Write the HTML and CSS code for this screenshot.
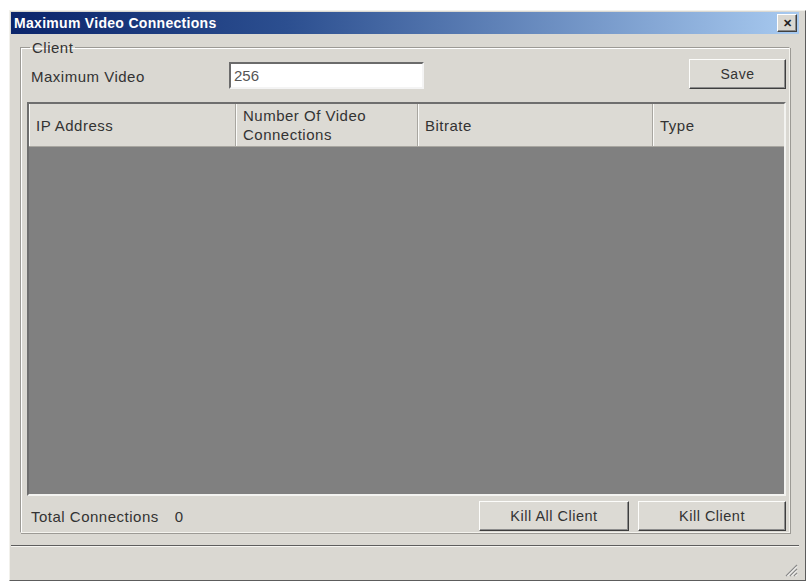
FILE: index.html
```html
<!DOCTYPE html>
<html lang="en">
<head>
  <meta charset="UTF-8">
  <meta name="viewport" content="width=device-width, initial-scale=1.0">
  <title>Maximum Video Connections</title>
  <link rel="stylesheet" href="styles.css">
</head>
<body>
  <div class="window">
    <!-- Barre de titre -->
    <div class="titlebar">
      <span class="title">Maximum Video Connections</span>
      <button class="close" title="Close">&#x2715;</button>
    </div>

    <div class="client-area">
      <fieldset class="group">
        <legend>Client</legend>

        <div class="top-row">
          <label for="max-video">Maximum Video</label>
          <input id="max-video" type="text" value="256">
          <button class="btn save">Save</button>
        </div>

        <!-- Liste des clients -->
        <div class="listview">
          <div class="lv-header">
            <div class="col">IP Address</div>
            <div class="col">Number Of Video<br>Connections</div>
            <div class="col">Bitrate</div>
            <div class="col">Type</div>
          </div>
          <div class="lv-body"></div>
        </div>

        <div class="bottom-row">
          <span class="total-label">Total Connections</span>
          <span class="total-value">0</span>
          <button class="btn kill-all">Kill All Client</button>
          <button class="btn kill">Kill Client</button>
        </div>
      </fieldset>
    </div>

    <div class="statusbar">
      <svg class="grip" width="13" height="13" viewBox="0 0 13 13">
        <path d="M12 1 L1 12 M12 5 L5 12 M12 9 L9 12" stroke="#8a8a8a" stroke-width="1.2"/>
        <path d="M12 2.5 L2.5 12 M12 6.5 L6.5 12 M12 10.5 L10.5 12" stroke="#ffffff" stroke-width="1"/>
      </svg>
    </div>
  </div>
</body>
</html>
```

FILE: styles.css
```css
/* Style général */
body {
  margin: 0;
  padding: 0;
  background: #fff;
  font-family: "Liberation Sans", Arial, sans-serif;
  font-size: 15px;
  letter-spacing: 0.5px;
  color: #333;
}

.window {
  box-sizing: border-box;
  width: 797px;
  height: 571px;
  margin: 10px 0 0 9px;
  padding: 1px 6px 2px 1px;
  background: #dad8d2;
  border: 1px solid;
  border-color: #f2f1ec #5c5c5c #5c5c5c #f2f1ec;
  display: flex;
  flex-direction: column;
}

/* Barre de titre */
.titlebar {
  height: 22px;
  flex-shrink: 0;
  display: flex;
  align-items: center;
  justify-content: space-between;
  padding: 0 2px 0 3px;
  background: linear-gradient(to right, #0b256b 0%, #2c4f90 35%, #a8caf0 100%);
}

.title {
  color: #fff;
  font-weight: bold;
  font-size: 14px;
  letter-spacing: 0.3px;
}

.close {
  width: 20px;
  height: 18px;
  padding: 0;
  font-size: 11px;
  font-weight: bold;
  line-height: 14px;
  letter-spacing: 0;
  color: #222;
  background: #d9d7d1;
  border: 1px solid;
  border-color: #fff #404040 #404040 #fff;
  box-shadow: inset -1px -1px 0 #8a8a8a;
}

.client-area {
  flex: 1;
  padding: 6px 9px 0 9px;
}

/* Cadre "Client" */
.group {
  margin: 0;
  padding: 4px 3px 1px 6px;
  border: 1px solid;
  border-color: #9c9a95 #f4f3ee #f4f3ee #9c9a95;
  box-shadow: 1px 1px 0 #fff inset, 1px 1px 0 #9c9a95;
}

.group legend {
  margin-left: 3px;
  padding: 0 2px;
  line-height: 15px;
}

.top-row {
  display: flex;
  align-items: center;
  height: 30px;
}

.top-row label {
  width: 198px;
  margin-left: 4px;
  margin-top: 4px;
  flex-shrink: 0;
}

.top-row input {
  box-sizing: border-box;
  width: 195px;
  height: 27px;
  margin-top: 3px;
  padding: 2px 3px;
  font-family: inherit;
  font-size: 15px;
  color: #555;
  background: #fff;
  border: 2px solid;
  border-color: #6b6b6b #f4f4f4 #f4f4f4 #6b6b6b;
  outline: none;
}

/* Boutons */
.btn {
  box-sizing: border-box;
  height: 30px;
  padding: 0;
  font-family: inherit;
  font-size: 14.5px;
  letter-spacing: 0.5px;
  color: #333;
  background: #dcdad4;
  border: 1px solid;
  border-color: #fdfdfb #3e3e3e #3e3e3e #fdfdfb;
  box-shadow: inset -1px -1px 0 #8c8c8c;
  cursor: pointer;
}

.save {
  width: 97px;
  margin-left: auto;
  font-size: 14px;
}

/* Liste */
.listview {
  box-sizing: border-box;
  height: 394px;
  margin-top: 13px;
  border: 2px solid;
  border-color: #6e6e6e #f3f3f0 #f3f3f0 #6e6e6e;
  display: flex;
  flex-direction: column;
}

.lv-header {
  height: 42px;
  flex-shrink: 0;
  display: grid;
  grid-template-columns: 207px 182px 235px 1fr;
  background: #dcdad4;
  border-bottom: 1px solid #a8a6a0;
}

.lv-header .col {
  display: flex;
  align-items: center;
  padding: 0 0 0 7px;
  line-height: 19px;
  border-right: 1px solid #a8a6a0;
  box-shadow: inset 1px 0 0 #fbfbf9;
}

.lv-header .col:last-child {
  border-right: none;
}

.lv-body {
  flex: 1;
  background: #808080;
}

.bottom-row {
  display: flex;
  align-items: center;
  height: 30px;
  margin-top: 5px;
}

.total-label {
  margin-left: 4px;
}

.total-value {
  margin-left: 16px;
}

.kill-all {
  width: 150px;
  margin-left: auto;
}

.kill {
  width: 148px;
  margin-left: 9px;
}

/* Barre d'état */
.statusbar {
  height: 31px;
  flex-shrink: 0;
  margin-top: 11px;
  border-top: 1px solid #5e5e5e;
  box-shadow: inset 0 1px 0 #f6f5f1;
  display: flex;
  align-items: flex-end;
  justify-content: flex-end;
  padding: 0 1px 1px 0;
}
```
